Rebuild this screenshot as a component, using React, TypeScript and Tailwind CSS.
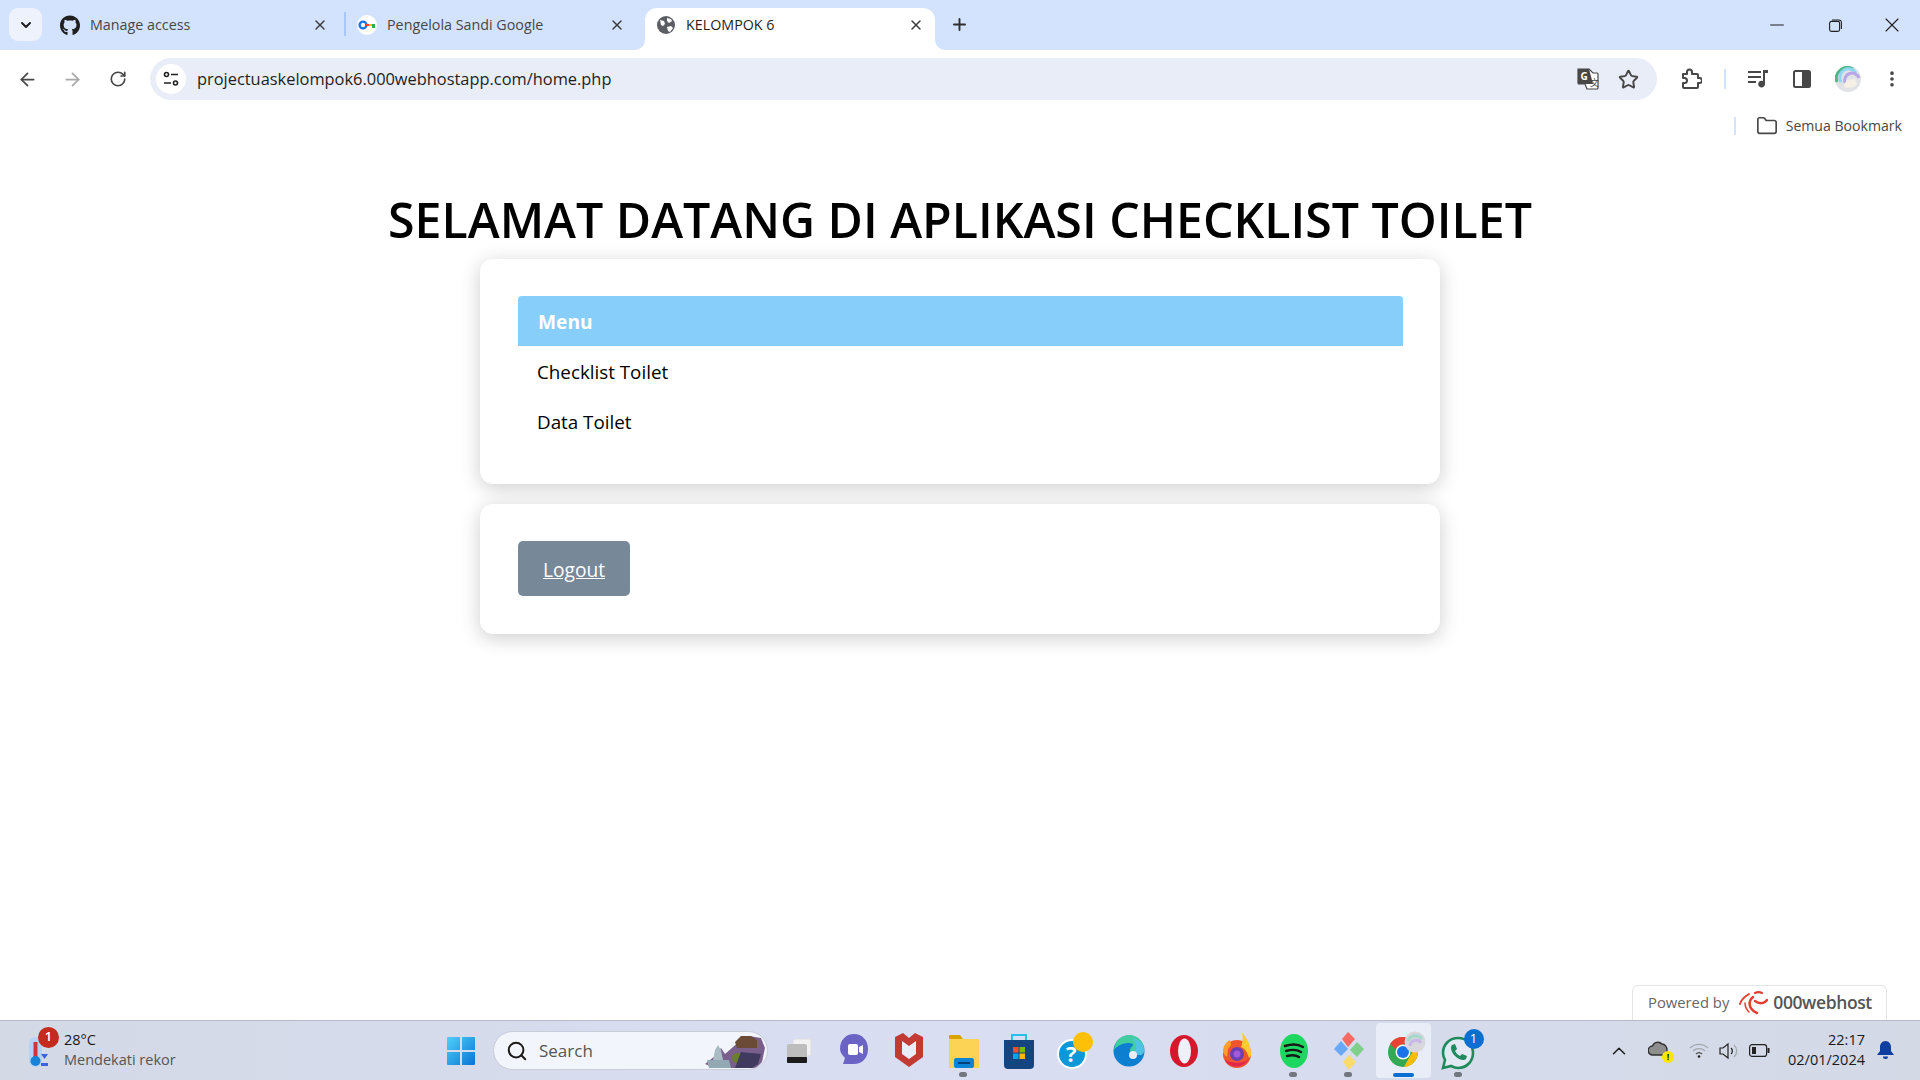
import React from "react";
import { ArrowLeft, ArrowRight, RotateCw, Star, ChevronDown, ChevronUp, X, Plus, Minus, MoreVertical, Folder, Search } from "lucide-react";
import { FaGithub } from "react-icons/fa";

const UI = "font-['Open_Sans','Noto_Sans',sans-serif]";

function Globe() {
  return (
    <svg width="18" height="18" viewBox="0 0 18 18">
      <circle cx="9" cy="9" r="9" fill="#5b5e63" />
      <path d="M3 4l4 1 1 3 -2 2 -2-1zM10 2l4 1 1 2-3 2-2-2zM10 11l4-1 2 2-3 4-2-1z" fill="#fff" />
    </svg>
  );
}

function KeyIcon() {
  return (
    <span className="flex h-[20px] w-[20px] items-center justify-center rounded-full bg-white">
      <svg width="18" height="12" viewBox="0 0 18 12">
        <circle cx="5" cy="6" r="3.4" fill="none" stroke="#1a73e8" strokeWidth="2.4" />
        <path d="M8 5h3v2H8z" fill="#ea4335" />
        <path d="M11 5h3v2h-3z" fill="#fbbc04" />
        <path d="M14 5h3v4h-3z" fill="#34a853" />
      </svg>
    </span>
  );
}

function Tab(props: { icon: React.ReactNode; title: string; active?: boolean }) {
  const { icon, title, active } = props;
  return (
    <div className={`relative flex h-[42px] w-[290px] shrink-0 items-center pb-[8px] pl-[11px] pr-[11px] ${active ? "rounded-t-[12px] bg-white" : ""}`}>
      <span className="flex w-[20px] shrink-0 items-center justify-center">{icon}</span>
      <span className={`ml-[10px] flex-1 truncate text-[14.3px] ${active ? "text-[#1f1f1f]" : "text-[#474747]"}`}>{title}</span>
      <X size={16} strokeWidth={2.2} className="text-[#3c3c3c]" />
    </div>
  );
}

function Row(props: { children: React.ReactNode; w: number }) {
  return (
    <div className="flex shrink-0 items-center justify-center" style={{ width: props.w }}>
      {props.children}
    </div>
  );
}

function Translate() {
  return (
    <svg width="22" height="22" viewBox="0 0 22 22">
      <path d="M1 1h11l4 4h4a1 1 0 0 1 1 1v14a1 1 0 0 1-1 1H10l-2-5H2a1 1 0 0 1-1-1z" fill="#fff" stroke="#474747" strokeWidth="1.2" />
      <path d="M2 1h10l4 15H2a1 1 0 0 1-1-1V2a1 1 0 0 1 1-1z" fill="#474747" />
      <text x="3.5" y="12" fontSize="10" fontWeight="700" fill="#fff" fontFamily="Open Sans">G</text>
      <text x="13" y="18" fontSize="9" fill="#474747" fontFamily="Noto Sans CJK SC">文</text>
    </svg>
  );
}

function Puzzle() {
  return (
    <svg width="22" height="22" viewBox="0 0 22 22" fill="none" stroke="#474747" strokeWidth="2" strokeLinejoin="round">
      <path d="M3 6h4V4a2.5 2.5 0 0 1 5 0v2h5a1 1 0 0 1 1 1v3h1.5a2.5 2.5 0 0 1 0 5H18v4a1 1 0 0 1-1 1H4a1 1 0 0 1-1-1v-4h1.5a2.5 2.5 0 0 0 0-5H3z" />
    </svg>
  );
}

function MediaIcon() {
  return (
    <svg width="21" height="20" viewBox="0 0 21 20" fill="#474747">
      <path d="M0 2h13v2H0zM0 7h13v2H0zM0 12h8v2H0zM15 1h5v3h-3v11a3.4 3.4 0 1 1-2-3z" />
    </svg>
  );
}

function SidePanel() {
  return (
    <svg width="18" height="18" viewBox="0 0 18 18">
      <rect x="1" y="1" width="16" height="16" rx="1.5" fill="#fff" stroke="#474747" strokeWidth="2" />
      <rect x="9" y="1" width="8" height="16" fill="#474747" />
    </svg>
  );
}

function Avatar() {
  return (
    <svg width="26" height="26" viewBox="0 0 26 26">
      <circle cx="13" cy="13" r="13" fill="#dfe3e6" />
      <path d="M2 16A11 11 0 0 1 18 3" fill="none" stroke="#52b788" strokeWidth="3" />
      <path d="M6 16A8 8 0 0 1 21 7" fill="none" stroke="#8fd6f0" strokeWidth="3" />
      <path d="M10 17A6 6 0 0 1 24 12" fill="none" stroke="#b9a6e8" strokeWidth="3" />
      <path d="M8 20l4-6 8-1 2 6-3 2-8 1z" fill="#f5f0e6" />
    </svg>
  );
}

function Windows() {
  return (
    <svg width="30" height="30" viewBox="0 0 30 30">
      <defs>
        <linearGradient id="w" x1="0" y1="0" x2="1" y2="1">
          <stop offset="0" stopColor="#4fd0fb" />
          <stop offset="1" stopColor="#0a74d4" />
        </linearGradient>
      </defs>
      <path d="M1 2a1 1 0 0 1 1-1h12v13H1zM16 1h12a1 1 0 0 1 1 1v12H16zM1 16h13v13H2a1 1 0 0 1-1-1zM16 16h13v12a1 1 0 0 1-1 1H16z" fill="url(#w)" />
    </svg>
  );
}

function Landscape() {
  return (
    <svg width="62" height="34" viewBox="0 0 62 34">
      <path d="M0 30l10-8 6-8 4 6 16-14 8-4 12 2 4 10-3 14-6 6H10z" fill="#7a5f8c" />
      <path d="M30 8l6-6h10l6 4v8H32z" fill="#6b4a36" />
      <path d="M2 26h22l2 8H4z" fill="#92a9b4" />
      <path d="M10 16l3-5 3 5 2 10H8z" fill="#a9bcc4" />
      <circle cx="32" cy="24" r="5" fill="#6b7f2a" />
      <path d="M36 18l20 2-3 10-6 4H30z" fill="#3f3a5e" />
    </svg>
  );
}

function TaskIcon(props: { children: React.ReactNode; dot?: boolean; active?: boolean }) {
  return (
    <div className={`relative flex h-[55px] w-[55px] shrink-0 items-center justify-center ${props.active ? "rounded-[4px] bg-[#e9edf8]" : ""}`}>
      {props.children}
      {props.dot && <span className="absolute bottom-[1px] left-[23px] h-[5px] w-[8px] rounded-full bg-[#71767f]" />}
      {props.active && <span className="absolute bottom-[1px] left-[17px] h-[4px] w-[21px] rounded-full bg-[#0a6fd0]" />}
    </div>
  );
}

const TaskIcons = [
  <TaskIcon key="v">
    <svg width="28" height="28" viewBox="0 0 28 28">
      <rect x="8" y="2" width="18" height="17" rx="2" fill="#f2f2f2" stroke="#ddd" />
      <rect x="2" y="7" width="20" height="19" rx="2" fill="#bdbdbd" />
      <rect x="2" y="20" width="20" height="6" rx="1" fill="#1c1c1c" />
    </svg>
  </TaskIcon>,
  <TaskIcon key="c">
    <svg width="30" height="38" viewBox="0 0 30 38">
      <path d="M15 2c8 0 14 6 14 15 0 9-6 15-14 15H4l2-6C3 23 1 20 1 17 1 8 7 2 15 2z" fill="#6c64c4" />
      <rect x="9" y="12" width="10" height="11" rx="2" fill="#fff" />
      <path d="M20 15l4-2v9l-4-2z" fill="#fff" />
    </svg>
  </TaskIcon>,
  <TaskIcon key="m">
    <svg width="28" height="38" viewBox="0 0 28 38">
      <path d="M0 5l8-4 6 5 6-5 8 4v20l-14 10L0 25z" fill="#c33a35" />
      <path d="M7 9l7 5 7-5v13l-7 5-7-5z" fill="#e9edf8" />
    </svg>
  </TaskIcon>,
  <TaskIcon key="f" dot>
    <svg width="30" height="36" viewBox="0 0 30 36">
      <path d="M0 3a1 1 0 0 1 1-1h10l3 4h-14z" fill="#d9a400" />
      <rect x="0" y="6" width="30" height="29" rx="1" fill="#fcd354" />
      <rect x="5" y="25" width="20" height="10" rx="2" fill="#0b84d8" />
      <rect x="9" y="29" width="12" height="2" fill="#073f7a" />
    </svg>
  </TaskIcon>,
  <TaskIcon key="s">
    <svg width="30" height="38" viewBox="0 0 30 38">
      <path d="M8 8V3h14v5" fill="none" stroke="#28c0e8" strokeWidth="2" />
      <path d="M0 8h30v25a4 4 0 0 1-4 4H4a4 4 0 0 1-4-4z" fill="#14457e" />
      <rect x="9" y="15" width="5.5" height="5.5" fill="#f25022" />
      <rect x="15.5" y="15" width="5.5" height="5.5" fill="#7fba00" />
      <rect x="9" y="21.5" width="5.5" height="5.5" fill="#00a4ef" />
      <rect x="15.5" y="21.5" width="5.5" height="5.5" fill="#ffb900" />
    </svg>
  </TaskIcon>,
  <TaskIcon key="h">
    <div className="relative ml-[6px] h-[42px] w-[40px]">
      <svg width="40" height="42" viewBox="0 0 40 42" className="absolute left-0 top-0">
        <circle cx="15" cy="24" r="14" fill="#0b97d8" stroke="#fff" strokeWidth="2" />
        <circle cx="26" cy="12" r="10" fill="#fdc007" />
        <text x="9" y="32" fontSize="22" fontWeight="700" fill="#fff" fontFamily="Open Sans">?</text>
      </svg>
    </div>
  </TaskIcon>,
  <TaskIcon key="e">
    <svg width="32" height="34" viewBox="0 0 32 34">
      <circle cx="16" cy="17" r="15.5" fill="#0c7fd0" />
      <path d="M1 16C2 6 9 1 16 1c9 0 15 7 15 14 0 3-1 6-5 6-5 0-9-1-9-5 0-3 3-3 3-6-6-3-16 1-19 6z" fill="#42cda0" />
      <path d="M20 4c6 2 11 6 11 12 0 3-1 5-5 5-3 0-5-1-6-2 2-1 3-3 3-5 0-4-2-7-3-10z" fill="#4fc3e6" />
      <circle cx="20" cy="21" r="4" fill="#e9edf7" />
    </svg>
  </TaskIcon>,
  <TaskIcon key="o">
    <svg width="30" height="34" viewBox="0 0 30 34">
      <ellipse cx="15" cy="17" rx="14" ry="16" fill="#d6172c" />
      <ellipse cx="15.5" cy="17" rx="6.5" ry="12.5" fill="#eef1f9" />
    </svg>
  </TaskIcon>,
  <TaskIcon key="ff">
    <svg width="30" height="38" viewBox="0 0 30 38" className="mr-[3px]">
      <circle cx="15" cy="22" r="14" fill="#f0562d" />
      <path d="M20 1c6 6 9 14 9 21 0 2-1 3-2 4-2-7-5-10-8-11 2-5 2-9 1-14z" fill="#ffcb2d" />
      <path d="M1 20c0-6 3-10 7-12l1 5-3 4-1 8c-2-1-3-3-4-5z" fill="#ff9f2b" />
      <circle cx="15" cy="22" r="7" fill="#6d3fb5" />
      <circle cx="15" cy="22" r="3.5" fill="#a25ad9" />
      <path d="M3 28c4 8 18 10 25-2-6 6-17 6-25 2z" fill="#e3264f" />
    </svg>
  </TaskIcon>,
  <TaskIcon key="sp" dot>
    <svg width="28" height="34" viewBox="0 0 28 34">
      <ellipse cx="14" cy="17" rx="14" ry="17" fill="#1ed760" />
      <path d="M5 12c6-2 13-2 18 1M6 17c5-1.500 11-1.500 15 1M7 22c4-1 9-1 12 1" stroke="#171717" strokeWidth="2.4" strokeLinecap="round" fill="none" />
    </svg>
  </TaskIcon>,
  <TaskIcon key="g" dot>
    <svg width="32" height="40" viewBox="0 0 32 40">
      <path d="M15 1l7 7-7 8-6-8z" fill="#f56a62" />
      <path d="M8 10l7 8-7 7-7-7z" fill="#6aa9f8" />
      <path d="M24 11l7 7-7 8-7-7z" fill="#7ed08a" />
      <path d="M16 24l7 7-7 8-6-8z" fill="#fbdc6a" />
    </svg>
  </TaskIcon>,
  <TaskIcon key="ch" active>
    <div className="relative ml-[5px] h-[40px] w-[40px]">
      <svg width="40" height="40" viewBox="0 0 40 40" className="absolute left-0 top-0">
        <circle cx="17" cy="21" r="15" fill="#34a853" />
        <path d="M17 6a15 15 0 0 1 13 7.500H17a7.500 7.500 0 0 0-7 5L4 13A15 15 0 0 1 17 6z" fill="#ea4335" />
        <path d="M30 13.500A15 15 0 0 1 18 36l6-11a7.500 7.500 0 0 0 0-11.500z" fill="#fbbc04" />
        <circle cx="17" cy="21" r="7.500" fill="#fff" />
        <circle cx="17" cy="21" r="6" fill="#1a73e8" />
        <circle cx="29" cy="11" r="10.500" fill="#d7d7dc" />
        <path d="M22 10a8 8 0 0 1 14-2" stroke="#a4d8cc" strokeWidth="3" fill="none" />
        <path d="M24 15a6 6 0 0 1 11-3" stroke="#c8b6ea" strokeWidth="3" fill="none" />
      </svg>
    </div>
  </TaskIcon>,
  <TaskIcon key="wa" dot>
    <div className="relative ml-[4px] h-[42px] w-[40px]">
      <svg width="40" height="42" viewBox="0 0 40 42" className="absolute left-0 top-0">
        <path d="M17 8c9 0 15 7 15 15s-6 15-15 15c-3 0-5-1-7-2l-8 2 2-8c-1-2-2-5-2-7 0-8 6-15 15-15z" fill="#e3e8f5" stroke="#1f8a5c" strokeWidth="2.6" />
        <path d="M11 15l3-1 2 5-2 2c1 2 3 4 5 5l2-2 5 2-1 3c-2 2-7 1-11-3-4-4-5-9-3-11z" fill="#1f8a5c" />
      </svg>
      <span className="absolute right-[-3px] top-[-1px] flex h-[20px] w-[20px] items-center justify-center rounded-full bg-[#0a6fd0] text-[13px] text-white">1</span>
    </div>
  </TaskIcon>,
];

export default function App() {
  return (
    <div className={`flex h-screen w-full flex-col overflow-hidden bg-white ${UI}`}>
      {/* tab strip */}
      <div className="flex h-[50px] shrink-0 items-end bg-[#d3e3fd]">
        <div className="mb-[9px] ml-[9px] flex h-[33px] w-[33px] shrink-0 items-center justify-center rounded-[9px] bg-[#edf2fc]">
          <ChevronDown size={16} strokeWidth={3} className="text-[#1f1f1f]" />
        </div>
        <div className="ml-[7px]"><Tab icon={<FaGithub size={21} className="text-[#1f1f1f]" />} title="Manage access" /></div>
        <div className="mb-[14px] ml-[5px] h-[24px] w-[2px] shrink-0 bg-[#a8c7fa]" />
        <Tab icon={<KeyIcon />} title="Pengelola Sandi Google" />
        <div className="relative ml-[9px]">
          <span className="absolute bottom-0 left-[-10px] h-[10px] w-[10px] bg-white" />
          <span className="absolute bottom-0 left-[-10px] h-[10px] w-[10px] rounded-br-[10px] bg-[#d3e3fd]" />
          <span className="absolute bottom-0 right-[-10px] h-[10px] w-[10px] bg-white" />
          <span className="absolute bottom-0 right-[-10px] h-[10px] w-[10px] rounded-bl-[10px] bg-[#d3e3fd]" />
          <Tab icon={<Globe />} title="KELOMPOK 6" active />
        </div>
        <div className="mb-[9px] ml-[8px] flex h-[33px] w-[33px] shrink-0 items-center justify-center">
          <Plus size={19} strokeWidth={2.4} className="text-[#2f2f2f]" />
        </div>
        <div className="flex-1" />
        <div className="mb-[3px] flex h-[44px] items-center text-[#1f1f1f]">
          <Row w={60}><Minus size={22} strokeWidth={1.2} /></Row>
          <Row w={56}>
            <svg width="13" height="13" viewBox="0 0 13 13" fill="none" stroke="#1f1f1f" strokeWidth="1.1">
              <rect x="0.6" y="2.400" width="10" height="10" rx="1.800" />
              <path d="M3 1h7a2.400 2.400 0 0 1 2.400 2.400V10" />
            </svg>
          </Row>
          <Row w={57}><X size={24} strokeWidth={1.1} /></Row>
        </div>
      </div>

      {/* toolbar */}
      <div className="flex h-[58px] shrink-0 items-center bg-white text-[#474747]">
        <Row w={54}><ArrowLeft size={21} strokeWidth={2} /></Row>
        <Row w={36}><ArrowRight size={21} strokeWidth={2} className="text-[#a8a8a8]" /></Row>
        <Row w={56}><RotateCw size={18} strokeWidth={2.2} /></Row>
        <div className="ml-[4px] flex h-[42px] w-[1507px] shrink-0 items-center rounded-full bg-[#e9edf7] pl-[6px] pr-[9px]">
          <div className="flex h-[30px] w-[30px] shrink-0 items-center justify-center rounded-full bg-white">
            <svg width="16" height="16" viewBox="0 0 16 16" fill="none" stroke="#1f1f1f" strokeWidth="1.600">
              <circle cx="3.500" cy="3.500" r="2" />
              <path d="M8 3.500h7M1 12h7" />
              <circle cx="12.500" cy="12" r="2" />
            </svg>
          </div>
          <span className="ml-[11px] flex-1 pt-[1px] text-[16.4px] text-[#1f1f1f]">projectuaskelompok6.000webhostapp.com/home.php</span>
          <Row w={41}><Translate /></Row>
          <Row w={40}><Star size={21} strokeWidth={2.2} /></Row>
        </div>
        <Row w={67}><Puzzle /></Row>
        <div className="h-[20px] w-[2px] shrink-0 bg-[#d3e3fd]" />
        <Row w={64}><MediaIcon /></Row>
        <Row w={24}><SidePanel /></Row>
        <Row w={68}><Avatar /></Row>
        <Row w={20}><MoreVertical size={20} strokeWidth={2.4} /></Row>
      </div>

      {/* bookmarks bar */}
      <div className="flex h-[34px] shrink-0 items-center justify-end bg-white pt-[1px] text-[#474747]">
        <div className="h-[18px] w-[2px] bg-[#d3e3fd]" />
        <Folder size={22} strokeWidth={1.800} className="ml-[20px]" />
        <span className="ml-[8px] mr-[18px] text-[14.1px]">Semua Bookmark</span>
      </div>

      {/* page */}
      <main className="relative flex-1 overflow-hidden bg-white">
        <h1 className="mt-[48px] h-[59px] text-center text-[48.25px] font-semibold leading-[59px] text-black">SELAMAT DATANG DI APLIKASI CHECKLIST TOILET</h1>
        <div className="mx-auto mt-[10px] h-[225px] w-[960px] rounded-[13px] bg-white pb-[37px] pl-[38px] pr-[37px] pt-[37px] shadow-[0_4px_20px_rgba(0,0,0,0.2)]">
          <div className="flex h-[50px] items-center rounded-t-[4px] bg-[#87cefa] pl-[20px] pt-[2px] text-[19.2px] font-bold text-white">Menu</div>
          <div className="flex h-[50px] items-center pl-[19px] pt-[2px] text-[18.8px] text-black">Checklist Toilet</div>
          <div className="flex h-[50px] items-center pl-[19px] pt-[2px] text-[18.8px] text-black">Data Toilet</div>
        </div>
        <div className="mx-auto mt-[20px] h-[130px] w-[960px] rounded-[13px] bg-white px-[38px] pt-[37px] shadow-[0_4px_20px_rgba(0,0,0,0.2)]">
          <div className="flex h-[55px] w-[112px] items-center justify-center rounded-[5px] bg-[#778899] pt-[3px] text-[19.2px] text-white underline">Logout</div>
        </div>
        <div className="absolute bottom-0 right-[33px] flex h-[35px] w-[255px] items-center rounded-t-[6px] border border-b-0 border-[#e4e4e4] bg-white pb-[2px] pl-[15px] text-[#666]">
          <span className="text-[14.8px] font-medium">Powered by</span>
          <svg width="30" height="26" viewBox="0 0 30 26" className="ml-[9px]" fill="none" stroke="#e53d30" strokeLinecap="round">
            <path d="M29 11c-3 4-8 4-12 1" strokeWidth="2.500" />
            <path d="M24 4c-2-1-5-1-7 0" strokeWidth="2" />
            <path d="M11 5C6 8 3 11 2 15" strokeWidth="2" />
            <path d="M15 8C10 12 10 20 19 24" strokeWidth="2.500" />
            <path d="M7 14c0 4 2 7 4 9" strokeWidth="1.500" />
          </svg>
          <span className="ml-[5px] text-[17.5px] font-semibold tracking-[-0.4px] text-[#555]">000webhost</span>
        </div>
      </main>

      {/* taskbar */}
      <footer className="flex h-[60px] shrink-0 items-center border-t border-[#b6bac6] bg-gradient-to-r from-[#d3d9e5] via-[#d9def3] to-[#d3d9e5] text-[#1b1b1b]">
        <div className="relative ml-[26px] flex w-[418px] shrink-0 items-center">
          <svg width="26" height="36" viewBox="0 0 26 36" className="mt-[2px] shrink-0">
            <rect x="3" y="3" width="13" height="30" rx="6.500" fill="#b5d4f5" />
            <rect x="7.500" y="8" width="4" height="18" fill="#d13438" />
            <circle cx="9.500" cy="27" r="5" fill="#1683d8" />
            <path d="M15 20h7l-3.500 5z" fill="#3c62e0" />
            <rect x="15" y="29" width="7" height="3" fill="#3c62e0" />
          </svg>
          <span className="absolute left-[12px] top-[-3px] flex h-[21px] w-[21px] items-center justify-center rounded-full bg-[#c42b1c] text-[13px] font-semibold text-white">1</span>
          <div className="mb-[2px] ml-[12px] flex flex-col text-[14.5px] leading-[20px]">
            <span>28°C</span>
            <span className="text-[#555]">Mendekati rekor</span>
          </div>
        </div>
        <Row w={34}><Windows /></Row>
        <div className="relative ml-[15px] flex h-[39px] w-[275px] shrink-0 items-center overflow-hidden rounded-full border border-[#c8cbd8] bg-[#f3f5fc] pl-[12px]">
          <Search size={22} strokeWidth={2.200} className="text-[#1b1b1b]" />
          <span className="ml-[11px] flex-1 text-[17px] text-[#555]">Search</span>
          <div className="absolute right-0 top-[2px]"><Landscape /></div>
        </div>
        <div className="ml-[3px] flex items-center">{TaskIcons}</div>
        <div className="flex-1" />
        <Row w={40}><ChevronUp size={22} strokeWidth={1.600} /></Row>
        <div className="relative ml-[9px] h-[24px] w-[24px] shrink-0">
          <svg width="20" height="16" viewBox="0 0 20 16" className="absolute left-0 top-[1px]">
            <path d="M5 15a4.500 4.500 0 0 1-.5-9C6 2 11 1 14 4c3 0 5 3 5 6v5z" fill="#8e8e8e" stroke="#303030" strokeWidth="1.400" />
          </svg>
          <span className="absolute bottom-0 right-[-2px] flex h-[12px] w-[12px] items-center justify-center rounded-full bg-[#ffe600] text-[9px] font-bold leading-none">!</span>
        </div>
        <div className="ml-[17px] flex w-[81px] shrink-0 items-center justify-between">
          <svg width="20" height="15" viewBox="0 0 20 15" fill="none" stroke="#a4a6ad" strokeWidth="1.200">
            <path d="M1 5a13 13 0 0 1 18 0M4 8a9 9 0 0 1 12 0" />
            <path d="M7 11a4.500 4.500 0 0 1 6 0" stroke="#444" />
            <circle cx="10" cy="13.500" r="1.300" fill="#222" stroke="none" />
          </svg>
          <svg width="20" height="18" viewBox="0 0 20 18" fill="none" stroke="#222" strokeWidth="1.200">
            <path d="M1 6h3l5-4v14l-5-4H1z" />
            <path d="M12 6a4 4 0 0 1 0 6" />
            <path d="M15 3a8 8 0 0 1 0 12" stroke="#a4a6ad" />
          </svg>
          <svg width="21" height="13" viewBox="0 0 21 13" fill="none" stroke="#222" strokeWidth="1.200">
            <rect x="0.600" y="0.600" width="17" height="11.800" rx="2.500" />
            <rect x="3" y="3" width="4" height="7" fill="#222" stroke="none" />
            <rect x="18.500" y="4" width="2" height="5" fill="#222" stroke="none" />
          </svg>
        </div>
        <div className="mb-[2px] ml-[18px] flex flex-col items-end text-[14.5px] leading-[20px]">
          <span>22:17</span>
          <span>02/01/2024</span>
        </div>
        <div className="ml-[10px] mr-[25px] flex h-[24px] w-[20px] shrink-0 items-center justify-center">
          <svg width="17" height="19" viewBox="0 0 17 19" fill="#0e3fa0">
            <path d="M8.500 0c3.500 0 5.500 3 5.500 6v4l3 4H0l3-4V6c0-3 2-6 5.500-6z" />
            <path d="M6 15.500h5a2.500 2.500 0 0 1-5 0z" />
          </svg>
        </div>
      </footer>
    </div>
  );
}
